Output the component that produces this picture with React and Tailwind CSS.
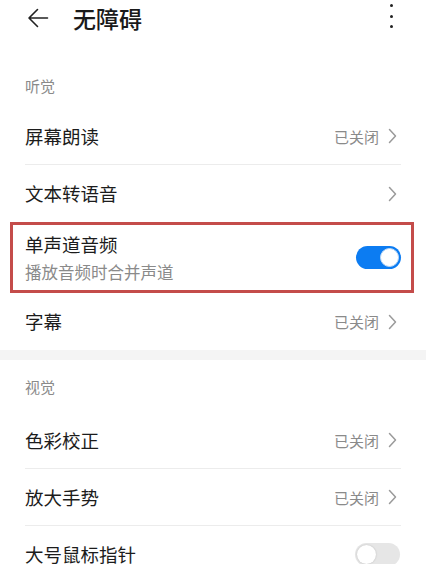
import React from "react";

const font = { fontFamily: '"Noto Sans CJK SC", "Noto Sans", sans-serif' };

function Chevron() {
  return (
    <svg width="9" height="16" viewBox="0 0 9 16" className="ml-[9px]">
      <path d="M1.5 1.5 L7.5 8 L1.5 14.5" fill="none" stroke="#9a9a9a" strokeWidth="1.5" strokeLinecap="round" strokeLinejoin="round" />
    </svg>
  );
}

function ToggleOn() {
  return (
    <div className="w-[45px] h-[23px] rounded-full bg-[#0c7cf2] flex items-center justify-end pr-[2px]">
      <div className="w-[19px] h-[19px] rounded-full bg-white border border-[#bcd8f5]" />
    </div>
  );
}

function ToggleOff() {
  return (
    <div className="w-[45px] h-[23px] rounded-full bg-[#e6e6e6] flex items-center justify-start pl-[2px]">
      <div className="w-[19px] h-[19px] rounded-full bg-white shadow-[0_0_2px_rgba(0,0,0,0.2)]" />
    </div>
  );
}

function Row({ title, value, chevron = true, divider = false, right }) {
  return (
    <div className="px-[25px]">
      <div className={`h-[57px] flex items-center justify-between ${divider ? "border-b border-[#ececec]" : ""}`}>
        <span className="text-[18.5px] text-[#1c1c1c] leading-none">{title}</span>
        {right ? (
          <div className="mr-[1px]">{right}</div>
        ) : (
          <div className="flex items-center pr-[4px]">
            {value && <span className="text-[15px] text-[#8a8a8a] leading-none">{value}</span>}
            {chevron && <Chevron />}
          </div>
        )}
      </div>
    </div>
  );
}

export default function App() {
  return (
    <div className="w-[426px] h-[564px] bg-white overflow-hidden" style={font}>
      {/* Header */}
      <div className="h-[36px] flex items-center relative">
        <svg width="24" height="24" viewBox="0 0 24 24" className="ml-[26px]">
          <path d="M21.5 12 H3.5 M11.5 3.5 L3 12 L11.5 20.5" fill="none" stroke="#222" strokeWidth="1.6" strokeLinecap="round" strokeLinejoin="round" />
        </svg>
        <span className="ml-[23px] text-[23px] font-medium text-[#1a1a1a] leading-none">无障碍</span>
        <div className="ml-auto mr-[33px] mb-[4px] flex flex-col gap-[7.5px] items-center">
          <div className="w-[3px] h-[3px] rounded-full bg-[#222]" />
          <div className="w-[3px] h-[3px] rounded-full bg-[#222]" />
          <div className="w-[3px] h-[3px] rounded-full bg-[#222]" />
        </div>
      </div>

      {/* 听觉 */}
      <div className="h-[72px] pt-[26px] px-[25px] flex items-center">
        <span className="text-[15px] text-[#8a8a8a] leading-none">听觉</span>
      </div>
      <Row title="屏幕朗读" value="已关闭" divider />
      <Row title="文本转语音" />
      <div className="mx-[10px] mr-[12px] h-[71px] border-[3px] border-[#c44c4a] flex items-center justify-between pl-[12px] pr-[10.5px]">
        <div className="flex flex-col">
          <span className="text-[18.5px] text-[#1c1c1c] leading-none">单声道音频</span>
          <span className="text-[16.5px] text-[#8a8a8a] leading-none mt-[11px]">播放音频时合并声道</span>
        </div>
        <ToggleOn />
      </div>
      <Row title="字幕" value="已关闭" />

      <div className="h-[10px] bg-[#f4f4f4]" />

      {/* 视觉 */}
      <div className="h-[52px] px-[25px] flex items-center">
        <span className="text-[15px] text-[#8a8a8a] leading-none">视觉</span>
      </div>
      <Row title="色彩校正" value="已关闭" divider />
      <Row title="放大手势" value="已关闭" divider />
      <Row title="大号鼠标指针" right={<ToggleOff />} />
    </div>
  );
}
